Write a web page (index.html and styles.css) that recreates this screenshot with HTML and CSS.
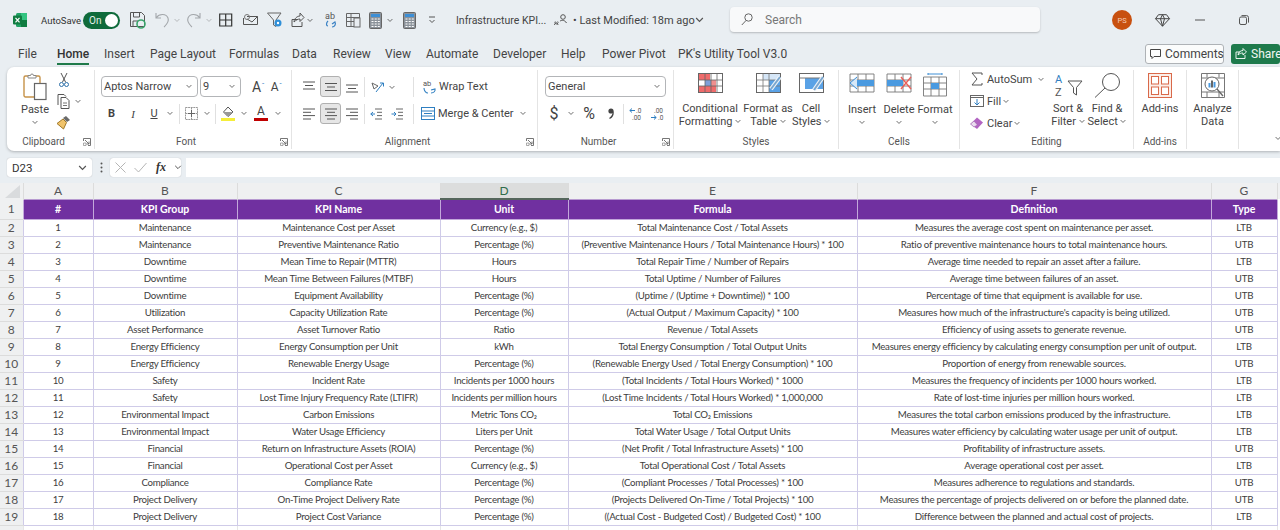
FILE: index.html
```html
<!DOCTYPE html>
<html lang="en">
<head>
<meta charset="utf-8">
<title>Infrastructure KPI</title>
<link rel="stylesheet" href="styles.css">
</head>
<body>
<svg class="defs" aria-hidden="true">
  <symbol id="chev" viewBox="0 0 7 5"><path d="M.7 .8 3.5 3.6 6.3 .8" fill="none" stroke="#555" stroke-width="1"/></symbol>
  <symbol id="launch" viewBox="0 0 8 8"><path d="M.5 3V.5h7v7H5M2 2l4 4M6 3.500V6H3.500" fill="none" stroke="#666" stroke-width=".9"/><path d="M.5 5h2.500v2.500H.5z" fill="none" stroke="#888" stroke-width=".7"/></symbol>
  <symbol id="calc" viewBox="0 0 13 17"><rect x=".5" y=".5" width="12" height="16" rx="1" fill="#8b929a" stroke="#666"/><rect x="2" y="2" width="9" height="3" fill="#3d8fd6"/><path d="M2.500 7h2M5.700 7h2M8.800 7h2M2.500 9.500h2M5.700 9.500h2M8.800 9.500h2M2.500 12h2M5.700 12h2M8.800 12h2M2.500 14.500h2M5.700 14.500h2M8.800 14.500h2" stroke="#fff" stroke-width="1.200"/></symbol>
</svg>

<header class="titlebar">
  <div class="logo-slot">
    <svg width="14" height="14" viewBox="0 0 14 14"><rect x="3" width="11" height="14" rx="1.500" fill="#21a366"/><rect x="8" y="7" width="6" height="7" fill="#107c41"/><rect x="8" y="0" width="6" height="7" fill="#33c481"/><rect y="2.500" width="9" height="9" rx="1" fill="#107c41"/><path d="M2.500 4.800 6.500 9.400M6.500 4.800 2.500 9.400" stroke="#fff" stroke-width="1.200"/></svg>
  </div>
  <span class="autosave">AutoSave</span>
  <span class="toggle"><span>On</span><i class="knob"></i></span>
  <div class="qat">
    <svg width="25" height="20" viewBox="0 0 25 20"><path d="M.5 2.500h11l3 3v11H.5z" fill="none" stroke="#555"/><path d="M3.500 3v4h6V3M3 16v-5h5" fill="none" stroke="#555"/><circle cx="11" cy="14" r="4" fill="none" stroke="#3aa56b" stroke-width="1.600"/></svg>
    <svg width="32" height="20" viewBox="0 0 32 20"><path d="M1 3v5h5M1.500 7.500C4 4 11 3 13 8c1.500 4-2 7-4 9" fill="none" stroke="#a3a7ab" stroke-width="1.100"/><use href="#chev" x="19" y="8" width="6" height="5" opacity=".4"/></svg>
    <svg width="32" height="20" viewBox="0 0 32 20"><path d="M13 3v5H8M12.500 7.500C10 4 3 3 1 8c-1.500 4 2 7 4 9" fill="none" stroke="#a3a7ab" stroke-width="1.100"/><use href="#chev" x="19" y="8" width="6" height="5" opacity=".4"/></svg>
    <svg width="24" height="20" viewBox="0 0 24 20"><path d="M.7 4h12v12H.7zM6.700 4v12M.7 10h12" fill="none" stroke="#333" stroke-width="1.200"/></svg>
    <svg width="24" height="20" viewBox="0 0 24 20"><path d="M4 6.500h10.500v8H.5V8" fill="none" stroke="#555"/><path d="m4 9 5 3 5.500-5.500" fill="none" stroke="#555"/><circle cx="4" cy="7" r="2.500" fill="none" stroke="#777"/></svg>
    <svg width="22" height="20" viewBox="0 0 22 20"><path d="M.5 3h13.500L9 10v6.500L6.500 15v-5z" fill="none" stroke="#666"/><circle cx="11" cy="13" r="3.500" fill="#2f8fd8"/><circle cx="11" cy="13" r="1.200" fill="#fff"/></svg>
    <svg width="35" height="20" viewBox="0 0 35 20"><path d="M9 9.500H3v7h10V12" fill="none" stroke="#555"/><path d="M5 12c0-3 3-6 6-6V3l4 4.500-4 4V9c-2 0-4 1-6 3z" fill="none" stroke="#555"/><use href="#chev" x="18" y="8" width="6" height="5"/></svg>
    <svg width="22" height="20" viewBox="0 0 22 20"><text x="1" y="9" class="svg-ab">ab</text><path d="M4 11c-2 2-2 5 0 5M8 17c3 0 4-3 3-5l-3 2" fill="none" stroke="#3b82c4" stroke-width="1.200"/></svg>
    <svg width="23" height="20" viewBox="0 0 23 20"><path d="M.5 3.500h13v13H.5zM.5 7.500h13M.5 11.500h13M5 3.500v13" fill="none" stroke="#666"/><rect x="8" y="8" width="6" height="9" fill="#e9edf1" stroke="#666"/></svg>
    <svg width="34" height="20" viewBox="0 0 34 20"><use href="#calc" x="0" y="2" width="13" height="17"/><use href="#chev" x="18" y="8" width="6" height="5"/></svg>
    <svg width="25" height="20" viewBox="0 0 25 20"><use href="#calc" x="0" y="2" width="13" height="17"/></svg>
    <svg width="9" height="20" viewBox="0 0 9 20"><path d="M1 7h6M1.500 10 4 12.500 6.500 10" fill="none" stroke="#555"/></svg>
  </div>
  <span class="doc-title">Infrastructure KPI...</span>
  <svg class="person" width="13" height="12" viewBox="0 0 13 12"><circle cx="9" cy="3" r="2.300" fill="none" stroke="#555"/><path d="M.5 11c.5-3 3-3 3.500 0M1.300 7.500a1.500 1.500 0 1 0 2.400 0M6 7c2-1 5-1 6.500 2" fill="none" stroke="#555"/></svg>
  <span class="modified">• Last Modified: 18m ago</span>
  <svg class="mod-chev" width="9" height="6"><use href="#chev" width="9" height="6"/></svg>
  <div class="search">
    <svg width="12" height="13" viewBox="0 0 12 13"><circle cx="7.500" cy="4.500" r="3.700" fill="none" stroke="#666"/><path d="M5 7.500 .8 12" stroke="#666"/></svg>
    <span>Search</span>
  </div>
  <span class="avatar">PS</span>
  <svg class="diamond" width="15" height="13" viewBox="0 0 15 13"><path d="M3.500 .7h8l3 4-7 7.500L.5 4.700zM.5 4.700h14M5.500 4.700l2 7.500 2-7.500-2-4z" fill="none" stroke="#444" stroke-width="1"/></svg>
  <svg class="win-min" width="10" height="2"><path d="M0 1h10" stroke="#555"/></svg>
  <svg class="win-max" width="10" height="10" viewBox="0 0 10 10"><rect x=".5" y="2" width="7" height="7.500" rx="1.500" fill="none" stroke="#555"/><path d="M2.500 .6h5a2 2 0 0 1 2 2v5" fill="none" stroke="#555"/></svg>
  <svg class="win-close" width="10" height="10" viewBox="0 0 10 10"><path d="M.5.5l9 9M9.500.5l-9 9" stroke="#555"/></svg>
</header>

<nav class="tabs">
  <a class="tab tab-file">File</a>
  <a class="tab tab-home">Home</a>
  <a class="tab tab-insert">Insert</a>
  <a class="tab tab-layout">Page Layout</a>
  <a class="tab tab-formulas">Formulas</a>
  <a class="tab tab-data">Data</a>
  <a class="tab tab-review">Review</a>
  <a class="tab tab-view">View</a>
  <a class="tab tab-automate">Automate</a>
  <a class="tab tab-dev">Developer</a>
  <a class="tab tab-help">Help</a>
  <a class="tab tab-pivot">Power Pivot</a>
  <a class="tab tab-pk">PK's Utility Tool V3.0</a>
  <button class="comments"><svg width="11" height="10" viewBox="0 0 11 10"><path d="M.5.5h10v7H4L2 9.500v-2H.5z" fill="none" stroke="#444"/></svg>Comments</button>
  <button class="share"><svg width="12" height="11" viewBox="0 0 12 11"><path d="M5 4H1v6.500h9V7M3 7c0-3 3-4.500 5-4.500V.5l3.500 3.500L8 7V5C6 5 4.500 5.500 3 7z" fill="none" stroke="#fff" stroke-width=".9"/></svg>Share</button>
</nav>

<section class="ribbon">
  <div class="group g-clip">
    <div class="body">
      <div class="big w42 ml7">
        <div class="big-ico">
          <svg width="24" height="28" viewBox="0 0 24 28"><rect x="1" y="3" width="16" height="21" rx="1.500" fill="#fff" stroke="#c69248" stroke-width="1.400"/><path d="M5 5V2.500h2.500a1.500 1.500 0 0 1 3 0H13V5z" fill="#fff" stroke="#888"/><rect x="11.500" y="10.500" width="11.500" height="16" fill="#fff" stroke="#666" stroke-width="1.200"/></svg>
        </div>
        <span>Paste</span>
        <svg class="bigchev" width="6" height="5"><use href="#chev" width="6" height="5"/></svg>
      </div>
      <div class="clip-col">
        <div class="mini"><svg class="w16" width="16" height="16" viewBox="0 0 16 16"><path d="M5 1l4.500 9M11 1 6.500 10" stroke="#555" fill="none"/><circle cx="5.500" cy="12.500" r="2" fill="none" stroke="#2c6fa8"/><circle cx="10.500" cy="12.500" r="2" fill="none" stroke="#2c6fa8"/></svg></div>
        <div class="mini"><svg class="w16" width="16" height="16" viewBox="0 0 16 16"><path d="M2 12V1.500h6L10 3.500" fill="none" stroke="#555"/><path d="M5 4.500h5l3 3v8H5z" fill="#fff" stroke="#555"/><path d="M7 10h4M7 12.500h4" stroke="#777"/></svg><svg class="ml3" width="6" height="5"><use href="#chev" width="6" height="5"/></svg></div>
        <div class="mini"><svg class="w16" width="16" height="16" viewBox="0 0 16 16"><path d="M10 2l4 4-3 2-4-4z" fill="#6a6a6a"/><path d="M7 5l3.500 3.500-3 6.500L1 9.500z" fill="#f0c36b" stroke="#a07828"/></svg></div>
      </div>
    </div>
    <div class="label lbl-l">Clipboard<svg class="launch" width="8" height="8"><use href="#launch" width="8" height="8"/></svg></div>
  </div>

  <div class="group g-font">
    <div class="rows">
      <div class="line">
        <div class="combo w97"><span>Aptos Narrow</span><svg width="6" height="5"><use href="#chev" width="6" height="5"/></svg></div>
        <div class="combo w41 ml2"><span>9</span><svg width="6" height="5"><use href="#chev" width="6" height="5"/></svg></div>
        <span class="s w23 ml6 glyph-a">A<sup>ˆ</sup></span>
        <span class="s w13 glyph-a2">A<sup>ˇ</sup></span>
      </div>
      <div class="line">
        <span class="s w21 tb">B</span>
        <span class="s w22 ti">I</span>
        <span class="s w20 tu">U</span>
        <span class="s w12"><svg width="6" height="5"><use href="#chev" width="6" height="5"/></svg></span>
        <span class="s w6"><i class="sep"></i></span>
        <span class="s w18"><svg width="13" height="13" viewBox="0 0 13 13"><path d="M.5.5h12v12H.5zM6.500.5v12M.5 6.500h12" fill="none" stroke="#999" stroke-dasharray="2 .6"/><path d="M6.500 3v7M3 6.500h7" stroke="#666"/></svg></span>
        <span class="s w13"><svg width="6" height="5"><use href="#chev" width="6" height="5"/></svg></span>
        <span class="s w5"><i class="sep"></i></span>
        <span class="s w20"><svg width="14" height="15" viewBox="0 0 14 15"><path d="M7 1 12 6 7 10.500 2.500 6z" fill="#fff" stroke="#555"/><path d="M2.500 6h9.500L7 10.500z" fill="#999"/><rect y="12" width="14" height="3" fill="#f5ee3a"/></svg></span>
        <span class="s w12"><svg width="6" height="5"><use href="#chev" width="6" height="5"/></svg></span>
        <span class="s w22 color-a">A</span>
        <span class="s w12"><svg width="6" height="5"><use href="#chev" width="6" height="5"/></svg></span>
      </div>
    </div>
    <div class="label lbl-l">Font<svg class="launch" width="8" height="8"><use href="#launch" width="8" height="8"/></svg></div>
  </div>

  <div class="group g-align">
    <div class="rows">
      <div class="line">
        <svg width="12" height="12" viewBox="0 0 12 12"><path d="M0 1h12M2 4.500h8M0 8h12" stroke="#555"/></svg>
        <span class="pressed ml5"><svg width="12" height="12" viewBox="0 0 12 12"><path d="M0 2.500h12M2 6h8M0 9.500h12" stroke="#555"/></svg></span>
        <svg class="ml5" width="12" height="12" viewBox="0 0 12 12"><path d="M0 4h12M2 7.500h8M0 11h12" stroke="#555"/></svg>
        <i class="sep ml6"></i>
        <svg class="ml5" width="26" height="14" viewBox="0 0 26 14"><path d="M2 3 8 6 4 9z" fill="none" stroke="#666"/><path d="M6 12 13 3" stroke="#2f7fc1"/><path d="M10 3h3.500v3.500" fill="none" stroke="#2f7fc1"/><use href="#chev" x="19" y="5" width="6" height="5"/></svg>
        <i class="sep ml17"></i>
        <svg class="ml9" width="13" height="15" viewBox="0 0 13 15"><text x="0" y="6.500" class="svg-ab small">ab</text><path d="M1 9c0 3 2 5 4 5M8 14c3 0 4.500-2 4-4L8 11" fill="none" stroke="#2f7fc1" stroke-width="1.100"/></svg>
        <span class="rtext ml3">Wrap Text</span>
      </div>
      <div class="line">
        <svg width="12" height="12" viewBox="0 0 12 12"><path d="M0 1h12M0 4.300h8M0 7.600h12M0 11h8" stroke="#555"/></svg>
        <span class="pressed ml5"><svg width="12" height="12" viewBox="0 0 12 12"><path d="M0 1h12M2 4.300h8M0 7.600h12M2 11h8" stroke="#555"/></svg></span>
        <svg class="ml5" width="12" height="12" viewBox="0 0 12 12"><path d="M0 1h12M4 4.300h8M0 7.600h12M4 11h8" stroke="#555"/></svg>
        <i class="sep ml6"></i>
        <svg class="ml5" width="12" height="12" viewBox="0 0 12 12"><path d="M5 1h7M7 4.300h5M7 7.600h5M5 11h7" stroke="#666"/><path d="M5 6H.8M3 4 .8 6 3 8" fill="none" stroke="#2f7fc1"/></svg>
        <svg class="ml9" width="12" height="12" viewBox="0 0 12 12"><path d="M5 1h7M7 4.300h5M7 7.600h5M5 11h7" stroke="#666"/><path d="M.5 6H5M3 4l2 2-2 2" fill="none" stroke="#2f7fc1"/></svg>
        <i class="sep ml10"></i>
        <svg class="ml7" width="14" height="13" viewBox="0 0 14 13"><rect x=".5" y=".5" width="13" height="12" fill="#fff" stroke="#2f7fc1"/><path d="M.5 4h13M.5 9h13" stroke="#2f7fc1"/><path d="M3 6.500h8" stroke="#2f7fc1"/></svg>
        <span class="rtext ml3 w73">Merge &amp; Center</span>
        <svg class="ml9" width="6" height="5"><use href="#chev" width="6" height="5"/></svg>
      </div>
    </div>
    <div class="label lbl-l">Alignment<svg class="launch" width="8" height="8"><use href="#launch" width="8" height="8"/></svg></div>
  </div>

  <div class="group g-num">
    <div class="rows">
      <div class="line">
        <div class="combo w121"><span>General</span><svg width="6" height="5"><use href="#chev" width="6" height="5"/></svg></div>
      </div>
      <div class="line">
        <span class="s w18 num-sym">$</span>
        <span class="s w12 ml2"><svg width="6" height="5"><use href="#chev" width="6" height="5"/></svg></span>
        <span class="s w22 ml1 num-sym">%</span>
        <span class="s w22"><svg width="6" height="11" viewBox="0 0 6 11"><circle cx="3" cy="3" r="2.600" fill="#444"/><path d="M5 3.500C5.500 6.500 4 9 1.500 10.500" fill="none" stroke="#444" stroke-width="1.300"/></svg></span>
        <i class="sep ml1"></i>
        <svg class="ml5" width="14" height="14" viewBox="0 0 14 14"><path d="M6 3.500H.8M3 1.500.8 3.500l2.200 2" fill="none" stroke="#2f7fc1"/><text x="7" y="6" class="svg-dec">.0</text><text x="3" y="13" class="svg-dec">.00</text></svg>
        <svg class="ml8" width="14" height="14" viewBox="0 0 14 14"><text x="3" y="6" class="svg-dec">.00</text><path d="M0 10.500h5.200M3 8.500l2.200 2-2.200 2" fill="none" stroke="#2f7fc1"/><text x="7" y="13" class="svg-dec">.0</text></svg>
      </div>
    </div>
    <div class="label lbl-l">Number<svg class="launch" width="8" height="8"><use href="#launch" width="8" height="8"/></svg></div>
  </div>

  <div class="group g-styles">
    <div class="body">
      <div class="big w56">
        <div class="big-ico"><svg width="25" height="20" viewBox="0 0 25 20"><rect x=".5" y=".5" width="24" height="19" fill="#fff" stroke="#666"/><rect x="1" y="1" width="11" height="6" fill="#ef6b6b"/><rect x="7" y="7" width="11" height="6" fill="#ef8f8f"/><rect x="7" y="7" width="6" height="6" fill="#7f9fd8"/><rect x="1" y="13" width="17" height="6" fill="#ef6b6b"/><path d="M7 .5v19M13 .5v19M19 .5v19M.5 7h24M.5 13h24" stroke="#666" stroke-width=".8"/></svg></div>
        <span>Conditional</span><span>Formatting <svg class="inl" width="6" height="5"><use href="#chev" width="6" height="5"/></svg></span>
      </div>
      <div class="big w44 ml8">
        <div class="big-ico"><svg width="25" height="20" viewBox="0 0 25 20"><rect x=".5" y=".5" width="24" height="19" fill="#fff" stroke="#666"/><rect x="13" y="7" width="11" height="12" fill="#5aa2e6"/><rect x="7" y="1" width="17" height="6" fill="#d5e6f7"/><path d="M7 .5v19M13 .5v19M.5 7h24M.5 13h24" stroke="#777" stroke-width=".8"/><path d="M24 4 15 16" stroke="#eef3f8" stroke-width="4"/><path d="M24 4 15 16" stroke="#7aa7cf" stroke-width="2"/></svg></div>
        <span>Format as</span><span>Table <svg class="inl" width="6" height="5"><use href="#chev" width="6" height="5"/></svg></span>
      </div>
      <div class="big w40 ml1">
        <div class="big-ico"><svg width="25" height="20" viewBox="0 0 25 20"><rect x=".5" y=".5" width="24" height="19" fill="#fff" stroke="#666"/><rect x="6" y="5" width="18" height="11" fill="#5aa2e6"/><path d="M.5 5h24" stroke="#777"/><path d="M24 4 15 17" stroke="#eef3f8" stroke-width="4"/><path d="M24 4 15 17" stroke="#7aa7cf" stroke-width="2"/></svg></div>
        <span>Cell</span><span>Styles <svg class="inl" width="6" height="5"><use href="#chev" width="6" height="5"/></svg></span>
      </div>
    </div>
    <div class="label">Styles</div>
  </div>

  <div class="group g-cells">
    <div class="body">
      <div class="big w36">
        <div class="big-ico"><svg width="26" height="20" viewBox="0 0 26 20"><path d="M1 1h24v18H1zM1 7h24M1 13h24M9 1v18M17 1v18" fill="none" stroke="#777" stroke-width=".9"/><rect x="4" y="7" width="21" height="6" fill="#4a9ae0"/><path d="M8 4 1 10l7 6" fill="#d6e8f8" stroke="#3f8fd5"/></svg></div>
        <span>Insert</span><svg class="bigchev" width="6" height="5"><use href="#chev" width="6" height="5"/></svg>
      </div>
      <div class="big w38">
        <div class="big-ico"><svg width="26" height="20" viewBox="0 0 26 20"><path d="M1 1h24v18H1zM1 7h24M1 13h24M9 1v18M17 1v18" fill="none" stroke="#777" stroke-width=".9"/><rect x="1" y="7" width="16" height="6" fill="#4a9ae0"/><path d="m15 4 10 12M25 4 15 16" stroke="#e8605a" stroke-width="1.400"/></svg></div>
        <span>Delete</span><svg class="bigchev" width="6" height="5"><use href="#chev" width="6" height="5"/></svg>
      </div>
      <div class="big w34">
        <div class="big-ico"><svg width="24" height="24" viewBox="0 0 24 24"><path d="M5 1h14M5 0v2M19 0v2" stroke="#3f8fd5"/><path d="M.5 4h23v19H.5zM.5 10h23M.5 16h23M8 4v19M16 4v19" fill="none" stroke="#777" stroke-width=".9"/><rect x="8" y="10" width="8" height="6" fill="#4a9ae0"/></svg></div>
        <span>Format</span><svg class="bigchev" width="6" height="5"><use href="#chev" width="6" height="5"/></svg>
      </div>
    </div>
    <div class="label">Cells</div>
  </div>

  <div class="group g-edit">
    <div class="body">
      <div class="edit-col">
        <div class="mini"><svg width="14" height="14" viewBox="0 0 14 14"><path d="M12 3V1H2l5 6-5 6h10v-2" fill="none" stroke="#555"/></svg><span class="ml3 rtext w41">AutoSum</span><svg class="ml10" width="6" height="5"><use href="#chev" width="6" height="5"/></svg></div>
        <div class="mini"><svg width="14" height="14" viewBox="0 0 14 14"><rect x=".5" y="1.500" width="13" height="11" fill="#fff" stroke="#666"/><path d="M.5 3.500h13" stroke="#666"/><path d="M7 5v6M4.500 8.500 7 11l2.500-2.500" fill="none" stroke="#2f7fc1"/></svg><span class="ml3 rtext">Fill</span><svg class="ml2" width="6" height="5"><use href="#chev" width="6" height="5"/></svg></div>
        <div class="mini"><svg width="14" height="14" viewBox="0 0 14 14"><path d="M.5 8 7 1.500l6 5L7 13z" fill="#b264c2"/><path d="M4 11 .5 8 4 5l3.500 4z" fill="#eadcef" stroke="#9a5aaa" stroke-width=".6"/></svg><span class="ml3 rtext">Clear</span><svg class="ml2" width="6" height="5"><use href="#chev" width="6" height="5"/></svg></div>
      </div>
      <div class="big w34">
        <div class="big-ico az-ico"><svg width="29" height="24" viewBox="0 0 29 24"><text x="1" y="10" class="svg-az">A</text><text x="1" y="23" class="svg-az dark">Z</text><path d="M14 8h14l-5.500 6.500V22l-3-2v-5.500z" fill="none" stroke="#555"/></svg></div>
        <span>Sort &amp;</span><span>Filter <svg class="inl" width="6" height="5"><use href="#chev" width="6" height="5"/></svg></span>
      </div>
      <div class="big w40 ml2">
        <div class="big-ico"><svg width="27" height="25" viewBox="0 0 27 25"><circle cx="17" cy="9" r="8.500" fill="none" stroke="#555"/><path d="M11 15 1 24.500" stroke="#555"/></svg></div>
        <span>Find &amp;</span><span>Select <svg class="inl" width="6" height="5"><use href="#chev" width="6" height="5"/></svg></span>
      </div>
    </div>
    <div class="label">Editing</div>
  </div>

  <div class="group g-addins">
    <div class="body">
      <div class="big wfull">
        <div class="big-ico"><svg width="24" height="25" viewBox="0 0 24 25"><rect x=".5" y=".5" width="23" height="24" fill="#fbeee8" stroke="#d9694a"/><rect x="3.500" y="3.500" width="7" height="7.500" fill="#fff" stroke="#d9694a"/><rect x="13.500" y="3.500" width="7" height="7.500" fill="#fff" stroke="#d9694a"/><rect x="3.500" y="14" width="7" height="7.500" fill="#fff" stroke="#d9694a"/><rect x="13.500" y="14" width="7" height="7.500" fill="#fff" stroke="#d9694a"/></svg></div>
        <span>Add-ins</span>
      </div>
    </div>
    <div class="label">Add-ins</div>
  </div>

  <div class="group g-analyze">
    <div class="body">
      <div class="big wfull">
        <div class="big-ico"><svg width="24" height="25" viewBox="0 0 24 25"><path d="M.5.5h23v24H.5zM.5 5h23M.5 19h23M6 .5v4M18 .5v4M6 19v5.500M18 19v5.500" fill="none" stroke="#777"/><circle cx="11" cy="11" r="7" fill="#fff" stroke="#666"/><rect x="7.500" y="10" width="2" height="4.500" fill="#4a9ae0"/><rect x="10" y="7.500" width="2" height="7" fill="#666"/><rect x="12.500" y="9" width="2" height="5.500" fill="#4a9ae0"/><path d="m16 16 6 7" stroke="#666" stroke-width="1.300"/></svg></div>
        <span>Analyze</span><span>Data</span>
      </div>
    </div>
    <div class="label"></div>
  </div>
  <svg class="collapse" width="6" height="5"><use href="#chev" width="6" height="5"/></svg>
</section>

<section class="formula">
  <div class="namebox"><span>D23</span><svg width="9" height="6"><use href="#chev" width="9" height="6"/></svg></div>
  <svg class="dots" width="3" height="11" viewBox="0 0 3 11"><circle cx="1.500" cy="1.500" r="1" fill="#555"/><circle cx="1.500" cy="5.500" r="1" fill="#555"/><circle cx="1.500" cy="9.500" r="1" fill="#555"/></svg>
  <div class="fxbox">
    <svg width="11" height="11" viewBox="0 0 11 11"><path d="m.5.5 10 10M10.500.5l-10 10" stroke="#b5b5b5"/></svg>
    <svg width="13" height="11" viewBox="0 0 13 11"><path d="m.5 6 4 4 8-9" fill="none" stroke="#b5b5b5"/></svg>
    <span class="fx">fx</span>
    <svg width="8" height="5"><use href="#chev" width="8" height="5"/></svg>
  </div>
  <div class="fxinput"></div>
</section>

<main class="sheet">
<table>
  <colgroup><col class="c0"><col class="c1"><col class="c2"><col class="c3"><col class="c4"><col class="c5"><col class="c6"><col class="c7"></colgroup>
  <thead><tr><th class="corner"><svg width="16" height="13" viewBox="0 0 16 13"><path d="M15 0v13H0z" fill="#d9dbdd"/></svg></th><th>A</th><th>B</th><th>C</th><th class="sel">D</th><th>E</th><th>F</th><th>G</th></tr></thead>
  <tbody>
  <tr class="hdr"><th>1</th><td>#</td><td>KPI Group</td><td>KPI Name</td><td>Unit</td><td>Formula</td><td>Definition</td><td>Type</td></tr>
  <tr><th>2</th><td>1</td><td>Maintenance</td><td>Maintenance Cost per Asset</td><td>Currency (e.g., $)</td><td>Total Maintenance Cost / Total Assets</td><td>Measures the average cost spent on maintenance per asset.</td><td>LTB</td></tr>
  <tr><th>3</th><td>2</td><td>Maintenance</td><td>Preventive Maintenance Ratio</td><td>Percentage (%)</td><td>(Preventive Maintenance Hours / Total Maintenance Hours) * 100</td><td>Ratio of preventive maintenance hours to total maintenance hours.</td><td>UTB</td></tr>
  <tr><th>4</th><td>3</td><td>Downtime</td><td>Mean Time to Repair (MTTR)</td><td>Hours</td><td>Total Repair Time / Number of Repairs</td><td>Average time needed to repair an asset after a failure.</td><td>LTB</td></tr>
  <tr><th>5</th><td>4</td><td>Downtime</td><td>Mean Time Between Failures (MTBF)</td><td>Hours</td><td>Total Uptime / Number of Failures</td><td>Average time between failures of an asset.</td><td>UTB</td></tr>
  <tr><th>6</th><td>5</td><td>Downtime</td><td>Equipment Availability</td><td>Percentage (%)</td><td>(Uptime / (Uptime + Downtime)) * 100</td><td>Percentage of time that equipment is available for use.</td><td>UTB</td></tr>
  <tr><th>7</th><td>6</td><td>Utilization</td><td>Capacity Utilization Rate</td><td>Percentage (%)</td><td>(Actual Output / Maximum Capacity) * 100</td><td>Measures how much of the infrastructure's capacity is being utilized.</td><td>UTB</td></tr>
  <tr><th>8</th><td>7</td><td>Asset Performance</td><td>Asset Turnover Ratio</td><td>Ratio</td><td>Revenue / Total Assets</td><td>Efficiency of using assets to generate revenue.</td><td>UTB</td></tr>
  <tr><th>9</th><td>8</td><td>Energy Efficiency</td><td>Energy Consumption per Unit</td><td>kWh</td><td>Total Energy Consumption / Total Output Units</td><td>Measures energy efficiency by calculating energy consumption per unit of output.</td><td>LTB</td></tr>
  <tr><th>10</th><td>9</td><td>Energy Efficiency</td><td>Renewable Energy Usage</td><td>Percentage (%)</td><td>(Renewable Energy Used / Total Energy Consumption) * 100</td><td>Proportion of energy from renewable sources.</td><td>UTB</td></tr>
  <tr><th>11</th><td>10</td><td>Safety</td><td>Incident Rate</td><td>Incidents per 1000 hours</td><td>(Total Incidents / Total Hours Worked) * 1000</td><td>Measures the frequency of incidents per 1000 hours worked.</td><td>LTB</td></tr>
  <tr><th>12</th><td>11</td><td>Safety</td><td>Lost Time Injury Frequency Rate (LTIFR)</td><td>Incidents per million hours</td><td>(Lost Time Incidents / Total Hours Worked) * 1,000,000</td><td>Rate of lost-time injuries per million hours worked.</td><td>LTB</td></tr>
  <tr><th>13</th><td>12</td><td>Environmental Impact</td><td>Carbon Emissions</td><td>Metric Tons CO₂</td><td>Total CO₂ Emissions</td><td>Measures the total carbon emissions produced by the infrastructure.</td><td>LTB</td></tr>
  <tr><th>14</th><td>13</td><td>Environmental Impact</td><td>Water Usage Efficiency</td><td>Liters per Unit</td><td>Total Water Usage / Total Output Units</td><td>Measures water efficiency by calculating water usage per unit of output.</td><td>LTB</td></tr>
  <tr><th>15</th><td>14</td><td>Financial</td><td>Return on Infrastructure Assets (ROIA)</td><td>Percentage (%)</td><td>(Net Profit / Total Infrastructure Assets) * 100</td><td>Profitability of infrastructure assets.</td><td>UTB</td></tr>
  <tr><th>16</th><td>15</td><td>Financial</td><td>Operational Cost per Asset</td><td>Currency (e.g., $)</td><td>Total Operational Cost / Total Assets</td><td>Average operational cost per asset.</td><td>LTB</td></tr>
  <tr><th>17</th><td>16</td><td>Compliance</td><td>Compliance Rate</td><td>Percentage (%)</td><td>(Compliant Processes / Total Processes) * 100</td><td>Measures adherence to regulations and standards.</td><td>UTB</td></tr>
  <tr><th>18</th><td>17</td><td>Project Delivery</td><td>On-Time Project Delivery Rate</td><td>Percentage (%)</td><td>(Projects Delivered On-Time / Total Projects) * 100</td><td>Measures the percentage of projects delivered on or before the planned date.</td><td>UTB</td></tr>
  <tr><th>19</th><td>18</td><td>Project Delivery</td><td>Project Cost Variance</td><td>Percentage (%)</td><td>((Actual Cost - Budgeted Cost) / Budgeted Cost) * 100</td><td>Difference between the planned and actual cost of projects.</td><td>LTB</td></tr>
  <tr class="blank"><th></th><td></td><td></td><td></td><td></td><td></td><td></td><td></td></tr>
  </tbody>
</table>
</main>
</body>
</html>
```
FILE: styles.css
```css
* { box-sizing: border-box; }
html, body { height: 100%; }
body {
  margin: 0;
  width: 1280px;
  height: 530px;
  overflow: hidden;
  background: #e9eef2;
  color: #424242;
  font-family: "Roboto", "Noto Sans", sans-serif;
  font-size: 11px;
}
.defs { display: none; }
svg { display: block; flex: none; overflow: visible; }

/* title bar */
.titlebar { display: flex; align-items: center; height: 40px; }
.titlebar > * { flex: none; }
.logo-slot { padding-left: 13px; width: 41px; }
.autosave { width: 42px; font-size: 9.5px; color: #333; white-space: nowrap; }
.toggle {
  display: flex; align-items: center; justify-content: space-between;
  width: 37px; height: 17px; padding: 0 2px 0 6px;
  border-radius: 9px; background: #0f6b3b; color: #e6f2ea; font-size: 10px;
}
.knob { width: 13px; height: 13px; border-radius: 50%; background: #fff; }
.qat { display: flex; align-items: center; margin-left: 10px; width: 326px; }
.svg-ab { font: 9px "Roboto", sans-serif; fill: #555; }
.svg-ab.small { font-size: 7.5px; }
.svg-dec { font: 6.5px "Roboto", sans-serif; fill: #555; }
.svg-az { font: 11px "Roboto", sans-serif; fill: #2f7fc1; }
.svg-az.dark { fill: #555; }
.doc-title { width: 98px; font-size: 10.5px; color: #444; white-space: nowrap; }
.person { margin-right: 6px; }
.modified { width: 122px; font-size: 11px; color: #444; white-space: nowrap; }
.search {
  display: flex; align-items: center; gap: 12px;
  width: 310px; height: 25px; margin-left: 26px; margin-top: -1px; padding-left: 11px;
  background: #f8f9fa; border-radius: 4px; box-shadow: 0 1px 2px rgba(0,0,0,.22);
  font-size: 12px; color: #777;
}
.avatar {
  display: flex; align-items: center; justify-content: center;
  width: 20px; height: 20px; margin-left: 72px;
  border-radius: 50%; background: #c8500f; color: #f5cdb4; font-size: 7.5px;
}
.diamond { margin-left: 23px; }
.win-min { margin-left: 25px; }
.win-max { margin-left: 34px; }
.win-close { margin-left: 32px; }

/* tabs */
.tabs { display: flex; align-items: center; height: 27px; position: relative; font-size: 12px; color: #444; }
.tab { display: block; white-space: nowrap; line-height: 20px; }
.tab-file { margin-left: 18px; width: 39px; }
.tab-home { width: 47px; font-weight: 500; color: #333; position: relative; }
.tab-home::after { content: ""; position: absolute; left: 0; top: 19px; width: 32px; height: 2px; background: #1f7a4a; }
.tab-insert { width: 46px; }
.tab-layout { width: 79px; }
.tab-formulas { width: 63px; }
.tab-data { width: 41px; }
.tab-review { width: 52px; }
.tab-view { width: 41px; }
.tab-automate { width: 67px; }
.tab-dev { width: 68px; }
.tab-help { width: 41px; }
.tab-pivot { width: 76px; }
.tab-pk { width: 467px; }
.comments, .share {
  display: flex; align-items: center; gap: 4px; flex: none;
  height: 20px; padding: 0 4px; border-radius: 3px; font: inherit;
  font-size: 12px; white-space: nowrap;
}
.comments { width: 79px; background: #fbfcfc; border: 1px solid #aeb2b6; color: #444; }
.share { width: 49px; margin-left: 7px; background: #1e7a4c; border: 0; color: #f1f7f3; padding-left: 4px; }

/* ribbon */
.ribbon {
  display: flex; position: relative;
  height: 84px; margin-left: 7px; padding: 3px 0 2px;
  background: #fff; border-radius: 7px 0 0 7px;
  box-shadow: 0 1px 3px rgba(0,0,0,.25);
}
.group { display: flex; flex-direction: column; height: 79px; border-right: 1px solid #e4e4e4; }
.g-clip { width: 88px; }
.g-font { width: 197px; }
.g-align { width: 246px; }
.g-num { width: 136px; }
.g-styles { width: 165px; }
.g-cells { width: 121px; }
.g-edit { width: 174px; }
.g-addins { width: 53px; }
.g-analyze { width: 52px; }
.body { display: flex; height: 65px; }
.rows { display: flex; flex-direction: column; gap: 6px; height: 65px; padding-top: 6px; }
.g-font .rows { padding-left: 6px; }
.g-align .rows { padding-left: 11px; }
.g-num .rows { padding-left: 7px; }
.g-styles .body { padding-left: 8px; }
.g-cells .body { padding-left: 5px; }
.g-edit .body { padding-left: 10px; }
.line { display: flex; align-items: center; height: 21px; }
.label { position: relative; height: 14px; line-height: 14px; font-size: 10px; text-align: center; color: #555; }
.lbl-l { padding-right: 14px; }
.launch { position: absolute; right: 3px; top: 3px; }
.big { display: flex; flex-direction: column; align-items: center; line-height: 13px; white-space: nowrap; color: #444; }
.big-ico { display: flex; align-items: flex-start; justify-content: center; height: 31.5px; padding-top: 3px; }
.g-cells .big-ico, .g-clip .big-ico { height: 32.5px; }
.bigchev { margin-top: 4px; }
.inl { display: inline-block; vertical-align: 1px; }
.wfull { width: 100%; }
.w42 { width: 42px; } .w56 { width: 56px; } .w44 { width: 44px; } .w40 { width: 40px; }
.w36 { width: 36px; } .w38 { width: 38px; } .w34 { width: 34px; } .w73 { width: 73px; }
.w5 { width: 5px; } .w6 { width: 6px; } .w12 { width: 12px; } .w13 { width: 13px; }
.w16 { width: 16px; } .w18 { width: 18px; } .w20 { width: 20px; } .w21 { width: 21px; }
.w22 { width: 22px; } .w23 { width: 23px; } .w41 { width: 41px; } .w97 { width: 97px; } .w121 { width: 121px; }
.ml1 { margin-left: 1px; } .ml2 { margin-left: 2px; } .ml3 { margin-left: 3px; } .ml5 { margin-left: 5px; }
.ml6 { margin-left: 6px; } .ml7 { margin-left: 7px; } .ml8 { margin-left: 8px; } .ml9 { margin-left: 9px; }
.ml10 { margin-left: 10px; } .ml17 { margin-left: 17px; }
.clip-col, .edit-col { display: flex; flex-direction: column; }
.clip-col { gap: 3px; padding-top: 1px; width: 38px; }
.edit-col { gap: 4px; width: 81px; }
.mini { display: flex; align-items: center; height: 18px; }
.rtext { white-space: nowrap; color: #444; }
.s { display: flex; align-items: center; justify-content: center; flex: none; }
.combo {
  display: flex; align-items: center; justify-content: space-between;
  height: 21px; padding: 0 5px 0 2px; flex: none;
  border: 1px solid #b3b5b8; border-radius: 4px; background: #fff; font-size: 11px; color: #444;
}
.glyph-a { font-size: 14px; color: #444; }
.glyph-a2 { font-size: 12px; color: #444; }
.glyph-a sup, .glyph-a2 sup { font-size: 8px; line-height: 0; color: #3b82c4; vertical-align: 6px; }
.tb { font-weight: 700; font-size: 11px; }
.ti { font-style: italic; font-size: 11px; font-family: "Liberation Serif", serif; }
.tu { text-decoration: underline; font-size: 11px; }
.color-a { font-size: 12px; line-height: 11px; border-bottom: 3px solid #c00000; width: 14px; margin: 0 4px; height: 15px; align-items: flex-start; }
.sep { display: block; width: 1px; height: 20px; background: #e0e0e0; flex: none; }
.pressed {
  display: flex; align-items: center; justify-content: center;
  width: 21px; height: 21px; background: #e6e6e6; border: 1px solid #b0b0b0; border-radius: 3px;
}
.num-sym { font-size: 16px; }
.collapse { position: absolute; right: -1px; top: 69px; }

/* formula bar */
.formula { display: flex; align-items: center; height: 19px; margin-top: 7px; }
.namebox {
  display: flex; align-items: center; justify-content: space-between;
  width: 85px; height: 19px; margin-left: 7px; padding: 0 5px;
  background: #fff; border-radius: 3px; font-size: 11.5px; color: #333;
  box-shadow: 0 0 1px rgba(0,0,0,.3);
}
.dots { margin-left: 8px; }
.fxbox {
  display: flex; align-items: center; gap: 8px;
  width: 71px; height: 19px; margin-left: 7px; padding: 0 3px 0 5px;
  background: #fff; border-radius: 3px; box-shadow: 0 0 1px rgba(0,0,0,.3);
}
.fx { font: italic 700 12px "Liberation Serif", serif; color: #333; width: 12px; margin-left: 1px; }
.fxinput { flex: 1; height: 19px; margin-left: 5px; background: #fff; }

/* sheet */
.sheet { margin-top: 6px; background: linear-gradient(#eff0f1 16px, #fff 16px); height: 347px; overflow: hidden; }
table { border-collapse: collapse; table-layout: fixed; width: 1277px; font-family: "Lato", sans-serif; font-size: 9.7px; letter-spacing: -.25px; color: #3d3d3d; }
.c0 { width: 23px; } .c1 { width: 70px; } .c2 { width: 144px; } .c3 { width: 203px; }
.c4 { width: 128px; } .c5 { width: 289px; } .c6 { width: 354px; } .c7 { width: 66px; }
thead th {
  height: 16px; padding: 0; background: #eff0f1; font-weight: 400; font-size: 12px; letter-spacing: 0; color: #555;
  font-family: "Lato", sans-serif; border-right: 1px solid #dcdcdc; line-height: 15px;
}
thead th.sel { background: #dcdddd; color: #2f6b4a; border-bottom: 2px solid #55665c; }
thead th.corner { position: relative; padding: 1px 0 0 5px; }
tbody th {
  padding: 0; height: 17px; background: #eff0f1; font-weight: 400; font-size: 12px; letter-spacing: 0; color: #555;
  font-family: "Lato", sans-serif; border-bottom: 1px solid #dcdcdc; line-height: 15px;
}
td {
  padding: 0; height: 17px; text-align: center; white-space: nowrap; overflow: hidden;
  border: 1px solid #cfcbe8; border-top: 0; line-height: 15px;
}
tr.hdr th { height: 20px; }
tr.hdr td { height: 20px; background: #7030a0; color: #fff; font-weight: 700; font-size: 10.5px; letter-spacing: 0; border-color: #c3a8db; border-top: 1px solid #b79ad0; }
tr.blank td { border-color: #e6e6e6; }
```
